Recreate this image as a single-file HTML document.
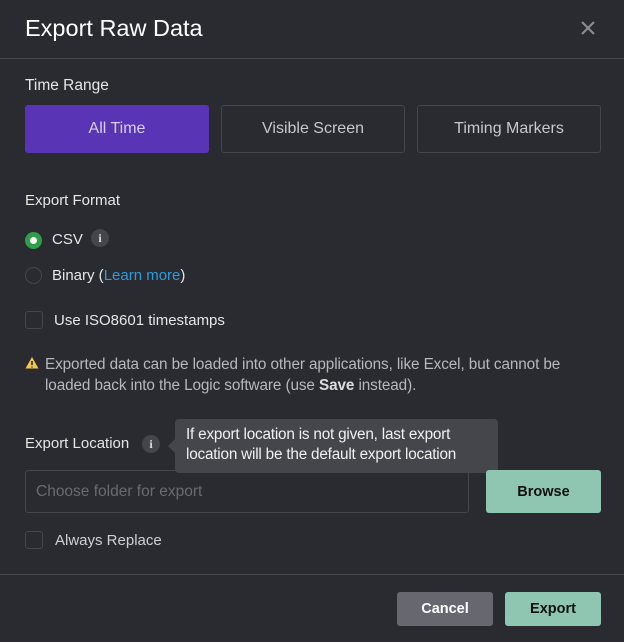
<!DOCTYPE html>
<html><head><style>
*{box-sizing:border-box;margin:0;padding:0}
body{width:624px;height:642px;background:#2a2b30;font-family:"Liberation Sans",sans-serif;color:#e6e6e6;position:relative;overflow:hidden}
.a{position:absolute;white-space:nowrap}
.btn{position:absolute;border:1px solid #45464c;border-radius:3px;display:flex;align-items:center;justify-content:center;font-size:16px;color:#c8c8cc}
.info{position:absolute;width:18px;height:18px;border-radius:50%;background:#45464c;color:#ddd;font:bold 12px "Liberation Serif",serif;display:flex;align-items:center;justify-content:center}
.cb{position:absolute;width:18px;height:18px;border:1px solid #45464c;border-radius:3px}
</style></head><body>
<div class="a" style="left:25px;top:15px;font-size:23.5px;color:#fff">Export Raw Data</div>
<svg class="a" style="left:580px;top:20px" width="16" height="16"><path d="M2 2L14 14M14 2L2 14" stroke="#8a8b90" stroke-width="2.2"/></svg>
<div class="a" style="left:0;top:58px;width:624px;height:1px;background:#45464c"></div>
<div class="a" style="left:25px;top:77px;font-size:15.5px">Time Range</div>
<div class="btn" style="left:25px;top:105px;width:184px;height:48px;background:#5934b5;border-color:#5934b5;color:#d8d0ee">All Time</div>
<div class="btn" style="left:221px;top:105px;width:184px;height:48px">Visible Screen</div>
<div class="btn" style="left:417px;top:105px;width:184px;height:48px">Timing Markers</div>
<div class="a" style="left:25px;top:192px;font-size:15px">Export Format</div>
<div class="a" style="left:25px;top:232px;width:17px;height:17px;border-radius:50%;background:#2e9e4b"></div>
<div class="a" style="left:30px;top:237px;width:7px;height:7px;border-radius:50%;background:#fff"></div>
<div class="a" style="left:52px;top:231px;font-size:15px">CSV</div>
<div class="info" style="left:91px;top:229px">i</div>
<div class="a" style="left:25px;top:267px;width:17px;height:17px;border-radius:50%;border:1.5px solid #45464c"></div>
<div class="a" style="left:52px;top:267px;font-size:15px">Binary (<span style="color:#2d9cdb">Learn more</span>)</div>
<div class="cb" style="left:25px;top:311px"></div>
<div class="a" style="left:54px;top:312px;font-size:15px">Use ISO8601 timestamps</div>
<svg class="a" style="left:25px;top:356px" width="14" height="13"><path d="M7 1L13.5 12.5H0.5Z" fill="#f2c94c"/><path d="M7 5V9M7 10.5V11.5" stroke="#222" stroke-width="1.5"/></svg>
<div class="a" style="left:45px;top:354px;font-size:15.3px;color:#b8b8bc;line-height:21px;letter-spacing:-0.1px">Exported data can be loaded into other applications, like Excel, but cannot be</div>
<div class="a" style="left:45px;top:375px;font-size:15.3px;color:#b8b8bc;line-height:21px;letter-spacing:-0.1px">loaded back into the Logic software (use <b style="color:#ddd">Save</b> instead).</div>
<div class="a" style="left:25px;top:435px;font-size:15px">Export Location</div>
<div class="info" style="left:142px;top:435px">i</div>
<div class="a" style="left:168px;top:439px;width:0;height:0;border:7px solid transparent;border-right-color:#45464c;border-left:0"></div>
<div class="a" style="left:175px;top:419px;width:323px;height:54px;background:#45464c;border-radius:4px;padding:6px 11px;font-size:15.3px;line-height:20px;color:#f0f0f0;letter-spacing:-0.2px">If export location is not given, last export<br>location will be the default export location</div>
<div class="a" style="left:25px;top:470px;width:444px;height:43px;border:1px solid #45464c;border-radius:3px;padding:12px 10px;font-size:15.5px;color:#6a6b70">Choose folder for export</div>
<div class="btn" style="left:486px;top:470px;width:115px;height:43px;background:#8ec6b2;border:none;color:#111;font-weight:bold;font-size:14.5px">Browse</div>
<div class="cb" style="left:25px;top:531px"></div>
<div class="a" style="left:55px;top:532px;font-size:15px;color:#d0d0d4">Always Replace</div>
<div class="a" style="left:0;top:574px;width:624px;height:1px;background:#45464c"></div>
<div class="btn" style="left:397px;top:592px;width:96px;height:34px;background:#67686f;border:none;color:#fff;font-weight:bold;font-size:14.5px">Cancel</div>
<div class="btn" style="left:505px;top:592px;width:96px;height:34px;background:#8ec6b2;border:none;color:#111;font-weight:bold;font-size:14.5px">Export</div>
</body></html>
